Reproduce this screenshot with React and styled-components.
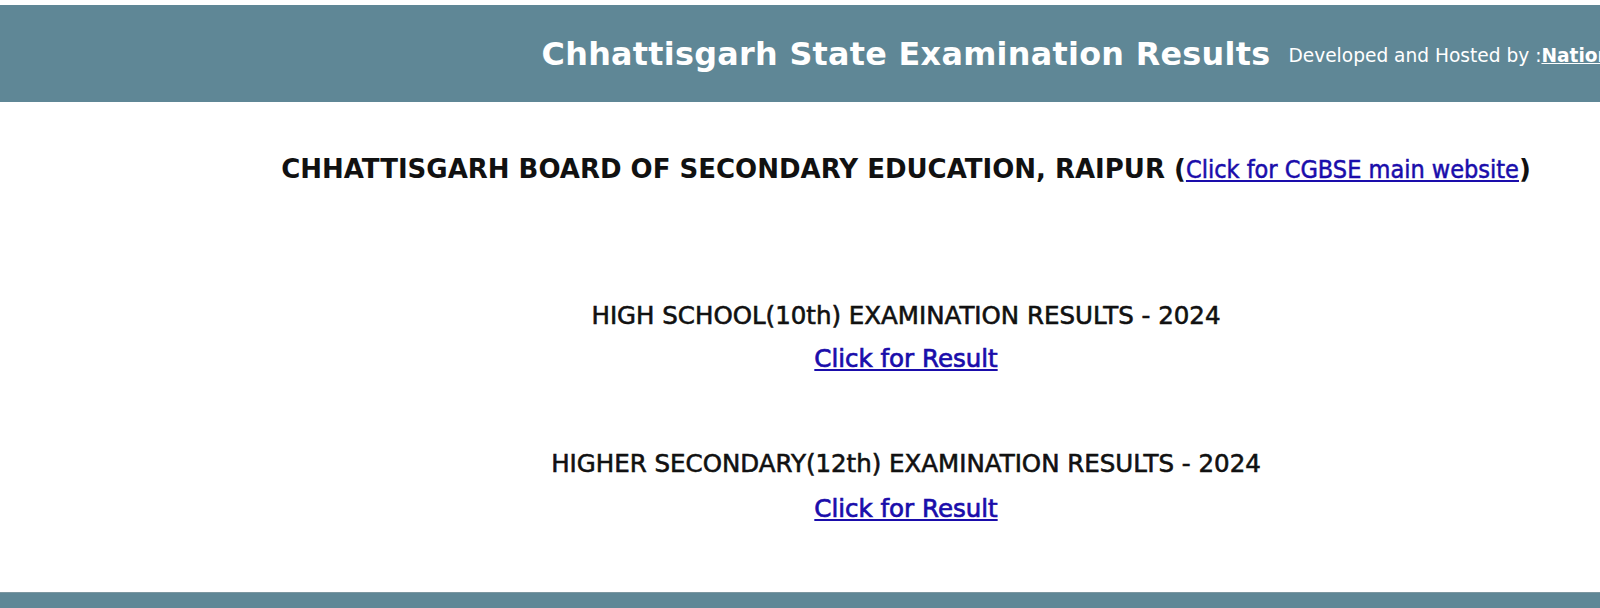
import React from 'react';
import styled, { createGlobalStyle } from 'styled-components';

const GlobalStyle = createGlobalStyle`
  html, body {
    margin: 0;
    padding: 0;
    background: #ffffff;
    overflow: hidden;
  }
  body {
    font-family: "DejaVu Sans", sans-serif;
  }
`;

const Page = styled.div`
  width: 1812px;
  padding-top: 5px;
`;

const Header = styled.div`
  background-color: #5f8796;
  height: 97px;
  display: grid;
  grid-template-columns: minmax(0, 1fr) auto minmax(0, 1fr);
  align-items: center;
  color: #ffffff;
  white-space: nowrap;
  overflow: hidden;
`;

const Title = styled.h1`
  grid-column: 2;
  margin: 0;
  font-size: 31.8px;
  font-weight: bold;
  letter-spacing: 0.3px;
`;

const Credit = styled.div`
  grid-column: 3;
  padding-left: 18px;
  font-size: 18.6px;
  padding-top: 4px;

  a {
    color: #ffffff;
    font-weight: bold;
  }
`;

const Main = styled.div`
  display: flex;
  flex-direction: column;
  align-items: center;
  padding-bottom: 68px;
`;

const Board = styled.h2`
  margin: 52px 0 0;
  font-size: 26px;
  line-height: 30px;
  font-weight: bold;
  color: #111111;

  a {
    font-family: "DejaVu Sans Condensed", "DejaVu Sans", sans-serif;
    font-size: 25px;
    font-weight: normal;
    color: #1a0dab;
    -webkit-text-stroke: 0.5px #1a0dab;
  }
`;

const Block = styled.div`
  display: flex;
  flex-direction: column;
  align-items: center;
  margin-top: ${p => p.top}px;
`;

const ExamTitle = styled.div`
  font-size: 24.5px;
  line-height: 30px;
  color: #111111;
  -webkit-text-stroke: 0.6px #111111;
`;

const ResultLink = styled.a`
  margin-top: ${p => p.gap}px;
  font-size: 24.5px;
  line-height: 30px;
  color: #1a0dab;
  -webkit-text-stroke: 0.7px #1a0dab;
`;

const Footer = styled.div`
  background-color: #5f8796;
  height: 40px;
  border-top: 1px solid #7c97a1;
`;

const exams = [
  { title: 'HIGH SCHOOL(10th) EXAMINATION RESULTS - 2024', top: 116, gap: 13 },
  { title: 'HIGHER SECONDARY(12th) EXAMINATION RESULTS - 2024', top: 75, gap: 15 },
];

export default function App() {
  return (
    <>
      <GlobalStyle />
      <Page>
        <Header>
          <Title>Chhattisgarh State Examination Results</Title>
          <Credit>
            Developed and Hosted by :<a href="#">National Informatics Centre, Chhattisgarh</a>
          </Credit>
        </Header>
        <Main>
          <Board>
            CHHATTISGARH BOARD OF SECONDARY EDUCATION, RAIPUR (<a href="#">Click for CGBSE main website</a>)
          </Board>
          {exams.map(e => (
            <Block key={e.title} top={e.top}>
              <ExamTitle>{e.title}</ExamTitle>
              <ResultLink href="#" gap={e.gap}>Click for Result</ResultLink>
            </Block>
          ))}
        </Main>
        <Footer />
      </Page>
    </>
  );
}
